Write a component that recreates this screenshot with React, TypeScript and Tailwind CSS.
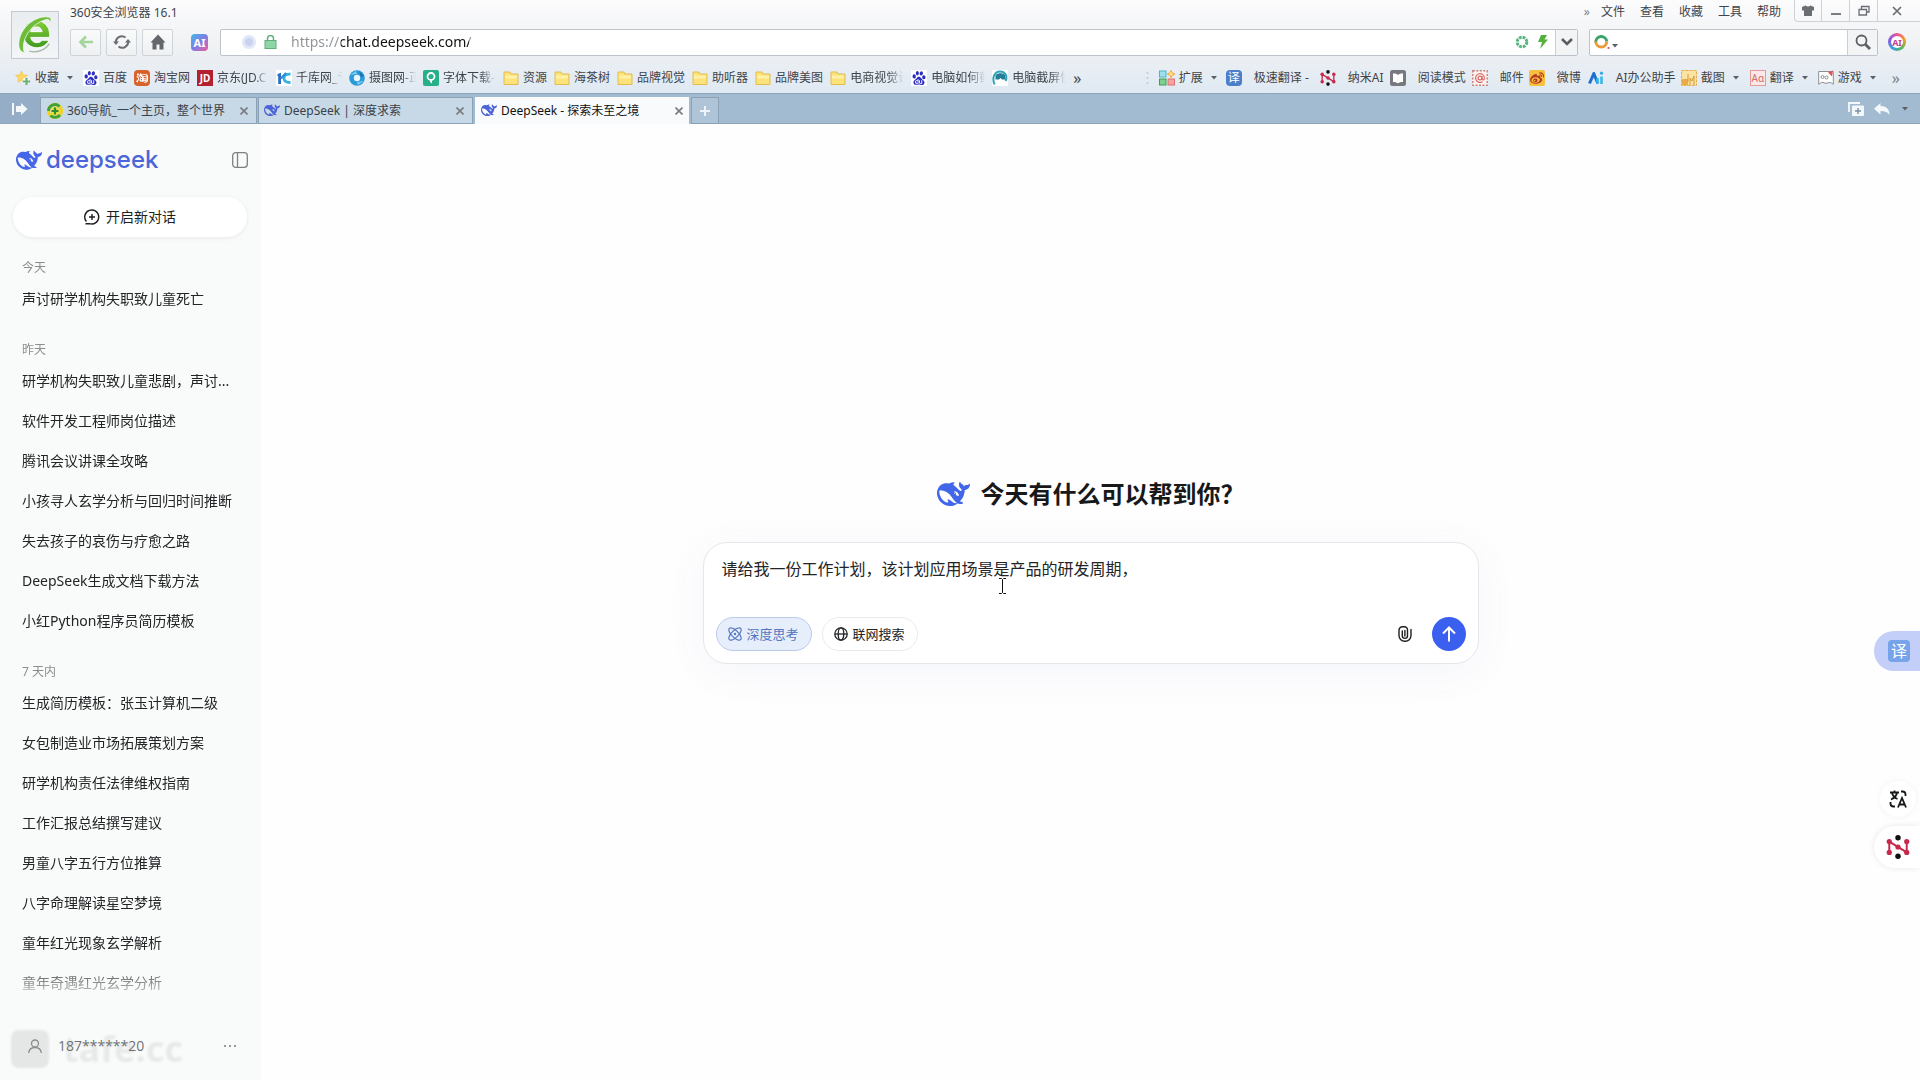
import type { ReactNode } from "react";
import { SiBaidu, SiSinaweibo } from "react-icons/si";
import { RiTaobaoFill } from "react-icons/ri";

const WHALE =
  "M23.748 4.482c-.254-.124-.364.113-.512.234-.051.039-.094.09-.137.136-.372.397-.806.657-1.373.626-.829-.046-1.537.214-2.163.848-.133-.782-.575-1.248-1.247-1.548-.352-.156-.708-.311-.955-.65-.172-.241-.219-.51-.305-.774-.055-.16-.11-.323-.293-.35-.2-.031-.278.136-.356.276-.313.572-.434 1.202-.422 1.84.027 1.436.633 2.58 1.838 3.393.137.093.172.187.129.323-.082.28-.18.552-.266.833-.055.179-.137.217-.329.14a5.526 5.526 0 01-1.736-1.18c-.857-.828-1.631-1.742-2.597-2.458a11.365 11.365 0 00-.689-.471c-.985-.957.13-1.743.388-1.836.27-.098.093-.432-.779-.428-.872.004-1.67.295-2.687.684a3.055 3.055 0 01-.465.137 9.597 9.597 0 00-2.883-.102c-1.885.21-3.39 1.102-4.497 2.623C.082 8.606-.231 10.684.152 12.85c.403 2.284 1.569 4.175 3.36 5.653 1.858 1.533 3.997 2.284 6.438 2.14 1.482-.085 3.133-.284 4.994-1.86.47.234.962.327 1.78.397.63.059 1.236-.03 1.705-.128.735-.156.684-.837.419-.961-2.155-1.004-1.682-.595-2.113-.926 1.096-1.296 2.746-2.642 3.392-7.003.05-.347.007-.565 0-.845-.004-.17.035-.237.23-.256a4.173 4.173 0 001.545-.475c1.396-.763 1.96-2.015 2.093-3.517.02-.23-.004-.467-.247-.588zM11.581 18c-2.089-1.642-3.102-2.183-3.52-2.16-.392.024-.321.471-.235.763.09.288.207.486.371.739.114.167.192.416-.113.603-.673.416-1.842-.14-1.897-.167-1.361-.802-2.5-1.86-3.301-3.307-.774-1.393-1.224-2.887-1.298-4.482-.02-.386.093-.522.477-.592a4.696 4.696 0 011.529-.039c2.132.312 3.946 1.265 5.468 2.774.868.86 1.525 1.887 2.202 2.891.72 1.066 1.494 2.082 2.48 2.914.348.292.625.514.891.677-.802.09-2.14.11-3.054-.614zm1-6.44a.306.306 0 01.415-.287.302.302 0 01.2.288.306.306 0 01-.31.307.303.303 0 01-.304-.308zm3.11 1.596c-.2.081-.399.151-.59.16a1.245 1.245 0 01-.798-.254c-.274-.23-.47-.358-.552-.758a1.73 1.73 0 01.016-.588c.07-.327-.008-.537-.239-.727-.187-.156-.426-.199-.688-.199a.559.559 0 01-.254-.078c-.11-.054-.2-.19-.114-.358.028-.054.16-.186.192-.21.356-.202.767-.136 1.146.016.352.144.618.408 1.001.782.391.451.462.576.685.914.176.265.336.537.445.848.067.195-.019.354-.25.452z";

function Whale({ className }: { className: string }) {
  return (
    <svg viewBox="0 2.5 24 18.5" className={className} fill="currentColor" aria-hidden="true">
      <path fillRule="evenodd" d={WHALE} />
    </svg>
  );
}

function BrowserLogo() {
  return (
    <svg viewBox="0 0 40 42" className="size-10" aria-hidden="true">
      <defs>
        <linearGradient id="leaf" x1="0" y1="0" x2="0" y2="1">
          <stop offset="0" stopColor="#86cf35" />
          <stop offset="1" stopColor="#3f9a22" />
        </linearGradient>
      </defs>
      <path d="M21 5.500a14.500 14.500 0 0 1 14.500 14.500v3.500H15.500c.7 3.500 3 5.500 6.500 5.500 2.500 0 4.500-1 5.500-2.500h7.500a14.500 14.500 0 1 1-14-21zM15.500 17.500h12c-.6-3.300-2.600-5-6-5s-5.400 1.700-6 5z" fill="url(#leaf)" fillRule="evenodd" stroke="#fff" strokeWidth="1" />
      <path d="M36 2.500C22-1 3 13 3 31c0 4.500 2 8 6 8.500C4.500 30 13 9 33 4.500c2 0 3 2 2 5 1.500-2 2.500-5 1-7z" fill="#6ebc3a" stroke="#f4faf0" strokeWidth=".8" />
      <path d="M14 38c8 2 17-1 21-8" stroke="#a5b8a8" strokeWidth="1.400" fill="none" />
    </svg>
  );
}

function Caret({ className = "" }: { className?: string }) {
  return (
    <svg viewBox="0 0 6 4" className={`h-1 w-1.5 shrink-0 text-[#5b6066] ${className}`} fill="currentColor" aria-hidden="true">
      <path d="M0 0h6L3 3.500z" />
    </svg>
  );
}

const Folder = () => (
  <svg viewBox="0 0 16 16" className="size-4" aria-hidden="true">
    <path d="M1 2h6l1 2h7v10.500H1z" fill="#fbe27a" stroke="#e2bd4c" />
    <path d="M2 5.500h12v3H2z" fill="#fff0a6" />
  </svg>
);

const Baidu = () => (
  <span className="flex size-4 items-center justify-center bg-white">
    <SiBaidu className="size-3.5 text-[#2c2fc0]" />
  </span>
);

const StarAdd = () => (
  <svg viewBox="0 0 16 16" className="size-4" aria-hidden="true">
    <path d="M6.500 1l1.800 3.800 4.200.5-3.100 2.900.8 4.100-3.700-2-3.700 2 .8-4.100L.5 5.300l4.200-.5z" fill="#fbd864" stroke="#edc04a" strokeWidth=".6" />
    <path d="M11 8v6M8 11h6" stroke="#fff" strokeWidth="4.500" />
    <path d="M11.500 8v7M8 11.500h7" stroke="#66b37a" strokeWidth="2.200" />
  </svg>
);

const Thousand = () => (
  <svg viewBox="0 0 16 16" className="size-4" aria-hidden="true">
    <path fill="#fff" d="M0 0h16v16H0z" />
    <path d="M1.500 4l3.500-1.200V14H2.200V6.200H1.500z" fill="#2a6fc4" />
    <path d="M14.500 4.200C10 4 8 5.500 8 8.200s2 4.400 6.500 4.300" stroke="#35b2e0" strokeWidth="2.800" fill="none" />
    <path d="M5 8.500L10 3" stroke="#2a8fd4" strokeWidth="2.200" />
  </svg>
);

const Shutter = () => (
  <svg viewBox="0 0 16 16" className="size-4" aria-hidden="true">
    <circle cx="8" cy="8" r="7.800" fill="#2b9ad8" />
    <path d="M1 5l6-4 1 3zM15 11l-6 4-1-3z" fill="#7fcdee" />
    <path d="M10 1l5 5-3 1z" fill="#1670b4" />
    <circle cx="8" cy="8" r="3.200" fill="#e8f6fd" />
  </svg>
);

const FontPin = () => (
  <svg viewBox="0 0 16 16" className="size-4" aria-hidden="true">
    <rect width="16" height="16" rx="2" fill="#25b08a" />
    <circle cx="8" cy="6.500" r="3.500" fill="none" stroke="#fff" strokeWidth="1.800" />
    <path d="M7 10h2v3.500L7 12z" fill="#fff" />
  </svg>
);

const Headset = () => (
  <svg viewBox="0 0 16 16" className="size-4" aria-hidden="true">
    <path fill="#fff" d="M0 0h16v16H0z" />
    <path d="M2.500 14.500C-.5 7 3 1.500 8 1.500S16 6 13.500 11" stroke="#2fa3b8" strokeWidth="2" fill="none" />
    <path d="M3.500 5c3-2.500 7-2.500 9.500 0l.5 4.500H10L8.500 8 7 9.500H3.500z" fill="#237e98" />
  </svg>
);

function Molecule({ className }: { className: string }) {
  return (
    <svg viewBox="0 0 22 22" className={className} aria-hidden="true">
      <path d="M3 16V6l16 10V6" stroke="#c8284a" strokeWidth="1.800" fill="none" strokeLinejoin="round" />
      <g fill="#c8284a">
        <circle cx="3" cy="6" r="2.400" />
        <circle cx="3" cy="16" r="2.400" />
        <circle cx="19" cy="6" r="2.400" />
        <circle cx="19" cy="16" r="2.400" />
        <circle cx="11" cy="11" r="2.400" />
      </g>
      <circle cx="11" cy="2.600" r="2.500" fill="#111" />
      <circle cx="11" cy="19.400" r="2.500" fill="#111" />
    </svg>
  );
}

const ExtensionIcon = () => (
  <svg viewBox="0 0 16 16" className="size-4" aria-hidden="true">
    <rect x=".5" y="1" width="6.500" height="6" fill="#9be2ee" stroke="#4fb4c8" />
    <rect x=".5" y="9" width="6.500" height="6" fill="#7fcf8f" stroke="#3c9f52" />
    <rect x="9" y="9" width="6.500" height="6" fill="#f5a3a3" stroke="#e07070" />
    <path d="M12 .5l1.300 2.200L15.700 4l-2.400 1.300L12 7.700l-1.300-2.400L8.300 4l2.400-1.300z" fill="#fbe08a" stroke="#f0a63a" />
  </svg>
);

const TranslateTile = ({ className }: { className: string }) => (
  <span className={`flex items-center justify-center text-white ${className}`}>译</span>
);

const Reader = () => (
  <svg viewBox="0 0 16 16" className="size-4" aria-hidden="true">
    <rect width="16" height="16" rx="2.500" fill="#77797f" />
    <path d="M3 3.500c2 0 4 .3 5 1.500 1-1.200 3-1.500 5-1.500V12c-2 0-3.500.3-5 1.300C6.500 12.300 5 12 3 12z" fill="#fff" />
  </svg>
);

const Mail = () => (
  <svg viewBox="0 0 16 16" className="size-4" aria-hidden="true">
    <rect x=".8" y=".8" width="14.400" height="14.400" fill="#fdf3f1" stroke="#c98078" strokeWidth="1.400" strokeDasharray="2 1.500" />
    <circle cx="8" cy="8" r="1.900" fill="none" stroke="#dd6a66" strokeWidth="1.200" />
    <path d="M10 6v3c0 1.500 2.400 1.200 2.400-1A4.400 4.400 0 1 0 10.500 11.700" fill="none" stroke="#dd6a66" strokeWidth="1.200" />
  </svg>
);

const Weibo = () => (
  <span className="flex size-4 items-center justify-center rounded-xs bg-[#f7c13d]">
    <SiSinaweibo className="size-3.5 text-[#b23a26]" />
  </span>
);

const Assistant = () => (
  <svg viewBox="0 0 16 16" className="size-4" aria-hidden="true">
    <path d="M1.500 13.500L5.800 3.500l4 10" stroke="#1f6fd0" strokeWidth="3" fill="none" strokeLinejoin="round" />
    <path d="M9.500 13.500V8M13.500 6.500v7.500" stroke="#35b8e8" strokeWidth="2.600" />
    <circle cx="13.500" cy="3.200" r="1.600" fill="#35a8e8" />
  </svg>
);

const Capture = () => (
  <svg viewBox="0 0 16 16" className="size-4" aria-hidden="true">
    <rect x=".5" y=".5" width="15" height="15" fill="#fbe3a4" stroke="#e6ae4c" strokeDasharray="3 1" />
    <path d="M1 15V9h6v6z" fill="#e9ad44" />
    <path d="M7 4v8M9 15V8l2 3 2-5v9" stroke="#d59a3a" fill="none" />
  </svg>
);

const Dictionary = () => (
  <span className="flex size-4 items-center justify-center border border-[#e79a9a] bg-[#fbe9e9] text-[10px] leading-none text-[#d86a6a]">Aα</span>
);

const Game = () => (
  <svg viewBox="0 0 16 16" className="size-4" aria-hidden="true">
    <path d="M.7 1.500h14.600v12.800l-2.800-2-4.500 1-4.500-1-2.800 2z" fill="#fff" stroke="#8c8f95" />
    <circle cx="4.500" cy="7" r="1.500" fill="none" stroke="#8c8f95" />
    <circle cx="8.500" cy="7.500" r="1.500" fill="none" stroke="#8c8f95" />
    <path d="M10 2.500l5-2-1 6z" fill="#d85858" />
  </svg>
);

const bookmarks: { label: string; icon: ReactNode; clip?: string }[] = [
  { label: "百度", icon: <Baidu /> },
  { label: "淘宝网", icon: <span className="flex size-4 items-center justify-center rounded-sm bg-[#d9622b]"><RiTaobaoFill className="size-3.5 text-white" /></span> },
  { label: "京东(JD.C", icon: <span className="flex size-4 items-center justify-center bg-[#b3202e] text-[10px] font-bold leading-none text-white">JD</span>, clip: "w-[52px]" },
  { label: "千库网_专", icon: <Thousand />, clip: "w-[46px]" },
  { label: "摄图网-正", icon: <Shutter />, clip: "w-[47px]" },
  { label: "字体下载-", icon: <FontPin />, clip: "w-[53px]" },
  { label: "资源", icon: <Folder /> },
  { label: "海茶树", icon: <Folder /> },
  { label: "品牌视觉", icon: <Folder /> },
  { label: "助听器", icon: <Folder /> },
  { label: "品牌美图", icon: <Folder /> },
  { label: "电商视觉设", icon: <Folder />, clip: "w-[54px]" },
  { label: "电脑如何截", icon: <Baidu />, clip: "w-[54px]" },
  { label: "电脑截屏快", icon: <Headset />, clip: "w-[54px]" },
];

const plugins: { label: string; icon: ReactNode; box: string; gap: string; caret?: boolean }[] = [
  { label: "扩展", icon: <ExtensionIcon />, box: "w-[67px]", gap: "gap-1", caret: true },
  { label: "极速翻译 -", icon: <TranslateTile className="size-4 rounded-sm bg-[#4a7fc9] text-xs leading-none" />, box: "w-[94px]", gap: "gap-3" },
  { label: "纳米AI", icon: <Molecule className="size-4" />, box: "w-[70px]", gap: "gap-3" },
  { label: "阅读模式", icon: <Reader />, box: "w-[82px]", gap: "gap-3" },
  { label: "邮件", icon: <Mail />, box: "w-[57px]", gap: "gap-3" },
  { label: "微博", icon: <Weibo />, box: "w-[59px]", gap: "gap-3" },
  { label: "AI办公助手", icon: <Assistant />, box: "w-[93px]", gap: "gap-3" },
  { label: "截图", icon: <Capture />, box: "w-[69px]", gap: "gap-1", caret: true },
  { label: "翻译", icon: <Dictionary />, box: "w-[68px]", gap: "gap-1", caret: true },
  { label: "游戏", icon: <Game />, box: "w-[74px]", gap: "gap-1", caret: true },
];

function Header() {
  const tool = "flex h-[27px] w-[31px] items-center justify-center rounded-xs border border-[#cfd4d9] bg-gradient-to-b from-[#fafbfb] to-[#eef0f2]";
  return (
    <header className="bg-gradient-to-b from-[#fcfcfd] via-[#eff1f3] to-[#dfe9f3] text-xs leading-4 text-[#3f444a]">
      <div className="flex h-[62px] gap-[11px] pl-[11px]">
        <button aria-label="360" className="mt-[11px] flex size-12 shrink-0 items-center justify-center border border-[#c3cad1] bg-gradient-to-b from-[#e9edf0] to-[#f3f5f7]">
          <BrowserLogo />
        </button>
        <div className="min-w-0 flex-1">
          <div className="flex h-6 items-start justify-between">
            <span className="mt-[5px]">360安全浏览器 16.1</span>
            <div className="flex items-start">
              <nav className="mt-1 mr-[13px] flex gap-[15px]">
                <span className="-mr-1 text-[#7c8188]">»</span>
                {["文件", "查看", "收藏", "工具", "帮助"].map((m) => (
                  <button key={m}>{m}</button>
                ))}
              </nav>
              <div className="flex h-[22px] rounded-bl-sm border-b border-l border-[#cdd2d7] text-[#6a6e73]">
                <button aria-label="皮肤" className="flex w-[27px] items-center justify-center border-r border-[#cdd2d7]">
                  <svg viewBox="0 0 12 12" className="size-3" fill="currentColor" aria-hidden="true"><path d="M0 2l3.500-1.500Q6 2.500 8.500.5L12 2v3.500H10V11H2V5.500H0z" /></svg>
                </button>
                <button aria-label="最小化" className="flex w-7 items-center justify-center border-r border-[#cdd2d7]"><span className="mt-1.5 h-0.5 w-2.5 bg-[#7a7e83]" /></button>
                <button aria-label="还原" className="flex w-7 items-center justify-center border-r border-[#cdd2d7]">
                  <svg viewBox="0 0 12 12" className="size-3" fill="none" stroke="currentColor" strokeWidth="1.300" aria-hidden="true"><path d="M3.500 4V1.500h7.500v5.500H8.500M1 4.500h7.500V10H1z" /></svg>
                </button>
                <button aria-label="关闭" className="flex w-[42px] items-center justify-center pr-1">
                  <svg viewBox="0 0 10 10" className="size-2.5" stroke="currentColor" strokeWidth="1.700" aria-hidden="true"><path d="M1 1l8 8M9 1L1 9" /></svg>
                </button>
              </div>
            </div>
          </div>
          <div className="flex h-9 items-center pr-3.5">
            <div className="flex gap-[5px]">
              <button aria-label="后退" className={tool}>
                <svg viewBox="0 0 16 14" className="h-3.5 w-4" fill="none" stroke="#a4d59b" strokeWidth="2.600" aria-hidden="true"><path d="M15 7H2.500M8 1.500L2.500 7 8 12.500" /></svg>
              </button>
              <button aria-label="刷新" className={tool}>
                <svg viewBox="0 0 18 16" className="h-4 w-[18px]" aria-hidden="true">
                  <path d="M3 9.500a6 6 0 0 1 9.500-6M15 6.500a6 6 0 0 1-9.500 6" fill="none" stroke="#6a6e73" strokeWidth="2" />
                  <path d="M0 7.500h6L3 11zM18 8.500h-6L15 5z" fill="#6a6e73" />
                </svg>
              </button>
              <button aria-label="主页" className={tool}>
                <svg viewBox="0 0 16 16" className="size-4" fill="#63676c" aria-hidden="true"><path d="M8 .5l7.500 8H13.500V15.500H9.500V10.500h-3v5H2.500v-7H.5z" /></svg>
              </button>
            </div>
            <button aria-label="AI" className="ml-[18px] flex size-[17px] items-center justify-center rounded-sm bg-gradient-to-br from-[#2fb8ea] via-[#7b7be6] to-[#ee4f9c] text-[11px] font-bold leading-none text-white">AI</button>
            <div className="ml-3 flex h-[27px] flex-1 items-center rounded-xs border border-[#bcc3ca] bg-white">
              <span className="ml-[21px] flex size-3.5 items-center justify-center rounded-full bg-[#e1e7f6]"><span className="size-2 rounded-full bg-[#c9d4f0]" /></span>
              <svg viewBox="0 0 13 14" className="ml-2 h-3.5 w-[13px]" aria-hidden="true">
                <path d="M3.500 6V3.500a3 3 0 0 1 6 0V6" fill="none" stroke="#5fae7c" strokeWidth="1.500" />
                <rect x="1" y="5.500" width="11" height="8" fill="#8fd6a6" stroke="#5fae7c" />
              </svg>
              <label className="sr-only" htmlFor="address">地址栏</label>
              <input
                id="address"
                defaultValue="https://chat.deepseek.com/"
                className="ml-3.5 min-w-0 flex-1 bg-[linear-gradient(to_right,#8f9296_50px,#111_50px,#111_178px,#8f9296_178px)] bg-clip-text text-sm leading-5 text-transparent outline-none"
              />
              <svg viewBox="0 0 14 14" className="mr-[9px] size-3.5" aria-hidden="true">
                <circle cx="7" cy="7" r="4.800" fill="none" stroke="#55b57e" strokeWidth="3" strokeDasharray="2.800 .97" />
              </svg>
              <svg viewBox="0 0 10 14" className="mr-[7px] h-3.5 w-2.5" fill="#54b13e" aria-hidden="true"><path d="M3 0h6L6.500 4.500H10L2 14l2-7H0z" /></svg>
              <button aria-label="展开地址" className="flex h-full w-[22px] items-center justify-center border-l border-[#c9ced4] bg-[#f2f4f5]">
                <svg viewBox="0 0 12 8" className="h-2 w-3" fill="none" stroke="#5a5e63" strokeWidth="2.600" aria-hidden="true"><path d="M1 1l5 5 5-5" /></svg>
              </button>
            </div>
            <div className="ml-[11px] flex h-[27px] w-[289px] items-center rounded-xs border border-[#bcc3ca] bg-white">
              <svg viewBox="0 0 16 16" className="ml-1 size-4" fill="none" strokeWidth="2.800" aria-hidden="true">
                <path d="M1.800 8.500a5.500 5.500 0 0 1 11-1" stroke="#3aa56a" />
                <path d="M1.800 7.500a5.500 5.500 0 0 0 11 0" stroke="#ee9a3a" />
                <path d="M14.500 13v2" stroke="#e0685a" strokeWidth="2" />
              </svg>
              <Caret className="mt-2 ml-0.5" />
              <label className="sr-only" htmlFor="search">搜索</label>
              <input id="search" className="min-w-0 flex-1 bg-transparent outline-none" />
              <button aria-label="搜索" className="flex h-full w-[30px] items-center justify-center border-l border-[#c9ced4] bg-[#f2f4f5]">
                <svg viewBox="0 0 16 16" className="size-4" fill="none" stroke="#5d6166" aria-hidden="true"><circle cx="6.500" cy="6.500" r="5" strokeWidth="1.800" /><path d="M10 10l5 5" strokeWidth="2.800" /></svg>
              </button>
            </div>
            <button aria-label="AI助手" className="ml-2.5 flex size-[18px] items-center justify-center rounded-full bg-[conic-gradient(#ee4f9c,#f0a020,#55b560,#35a0e8,#8a5ae0,#ee4f9c)]">
              <span className="flex size-3 items-center justify-center rounded-full bg-white text-[9px] font-bold leading-none text-[#c04090]">AI</span>
            </button>
          </div>
        </div>
      </div>
      <div className="flex h-8 items-center justify-between border-b border-[#8ea6bc]">
        <nav className="flex items-center pl-[15px]">
          <a href="#" className="mr-2.5 flex items-center gap-1"><StarAdd />收藏<Caret className="ml-1" /></a>
          {bookmarks.map((b) => (
            <a key={b.label} href="#" className="mr-[7px] flex items-center gap-1">
              {b.icon}
              {b.clip ? (
                <span className={`overflow-hidden whitespace-nowrap [mask-image:linear-gradient(to_right,#000_70%,transparent)] ${b.clip}`}>{b.label}</span>
              ) : (
                <span className="whitespace-nowrap">{b.label}</span>
              )}
            </a>
          ))}
          <span className="text-base leading-4">»</span>
        </nav>
        <nav className="flex items-center pr-5">
          <svg viewBox="0 0 4 14" className="mr-[9px] h-3.5 w-1" fill="#c3c8cd" aria-hidden="true"><circle cx="1.500" cy="2" r="1" /><circle cx="1.500" cy="7" r="1" /><circle cx="1.500" cy="12" r="1" /></svg>
          {plugins.map((p) => (
            <a key={p.label} href="#" className={`flex items-center whitespace-nowrap ${p.gap} ${p.box}`}>
              <span className="shrink-0">{p.icon}</span>
              {p.label}
              {p.caret && <Caret className="ml-1" />}
            </a>
          ))}
          <span className="text-base leading-4 text-[#7c8188]">»</span>
        </nav>
      </div>
    </header>
  );
}

function TabClose() {
  return (
    <button aria-label="关闭标签页" className="ml-auto text-[#777c82]">
      <svg viewBox="0 0 8 8" className="size-2" stroke="currentColor" strokeWidth="1.600" aria-hidden="true"><path d="M.5.5l7 7M7.500.5l-7 7" /></svg>
    </button>
  );
}

function TabStrip() {
  return (
    <div className="flex h-[30px] items-end bg-[#a3bbd1] text-xs leading-4 text-[#3a4148]">
      <button aria-label="标签列表" className="flex h-full w-10 items-center justify-center border-b border-[#8ea3b7] bg-[#95adc6]">
        <svg viewBox="0 0 16 12" className="h-3 w-4" fill="#f4f8fb" aria-hidden="true"><path d="M0 0h2v12H0zM4 3h5V0l6.500 6L9 12V9H4z" /></svg>
      </button>
      <div className="flex h-[27px] w-[217px] items-center gap-1 border border-[#8ba1b6] bg-[#c7d8e6] pr-2 pl-1.5">
        <svg viewBox="0 0 16 16" className="size-4" aria-hidden="true">
          <circle cx="8" cy="8" r="6.500" fill="none" stroke="#f2d21f" strokeWidth="3" />
          <path d="M1.500 8a6.500 6.500 0 0 1 11-4.500M13 12a6.500 6.500 0 0 1-9.500.5" fill="none" stroke="#3fa33a" strokeWidth="3" />
          <circle cx="8" cy="8" r="4.500" fill="#ecdf3c" />
          <path d="M8 4.500v7M4.500 8h7" stroke="#2f8c34" strokeWidth="2.200" />
        </svg>
        <span className="whitespace-nowrap">360导航_一个主页，整个世界</span>
        <TabClose />
      </div>
      <div className="ml-px flex h-[27px] w-[215px] items-center gap-1 border border-[#8ba1b6] bg-[#c7d8e6] pr-2 pl-[5px]">
        <Whale className="w-4 text-[#4d63d8]" />
        <span>DeepSeek | 深度求索</span>
        <TabClose />
      </div>
      <div className="ml-0.5 flex h-[27px] w-[214px] items-center gap-1 bg-[#f8fafc] pr-1.5 pl-1.5 text-[#111]">
        <Whale className="w-4 text-[#4d63d8]" />
        <span>DeepSeek - 探索未至之境</span>
        <TabClose />
      </div>
      <button aria-label="新建标签页" className="ml-0.5 flex h-[27px] w-7 items-center justify-center border border-[#8ba1b6] bg-[#afc4d7]">
        <svg viewBox="0 0 12 12" className="size-3" stroke="#edf3f8" strokeWidth="2" aria-hidden="true"><path d="M6 1v10M1 6h10" /></svg>
      </button>
      <div className="flex h-full flex-1 items-center justify-end gap-2.5 border-b border-[#8ea3b7] pr-3">
        <button aria-label="复制标签页">
          <svg viewBox="0 0 16 14" className="h-3.5 w-4" aria-hidden="true"><path d="M1 10V1h11" fill="none" stroke="#f4f8fb" strokeWidth="1.800" /><rect x="4" y="3.500" width="12" height="10.500" rx="1" fill="#f4f8fb" /><path d="M10 6v6M7 9h6" stroke="#7890a8" strokeWidth="1.400" /></svg>
        </button>
        <button aria-label="恢复标签页">
          <svg viewBox="0 0 16 12" className="h-3 w-4" fill="#f4f8fb" aria-hidden="true"><path d="M6.500 0v3C12 3 15.500 6 15.500 12 13.500 9 11 8 6.500 8v3.500L0 5.700z" /></svg>
        </button>
        <Caret className="ml-0.5" />
      </div>
    </div>
  );
}

const history = [
  { label: "今天", items: ["声讨研学机构失职致儿童死亡"] },
  {
    label: "昨天",
    items: ["研学机构失职致儿童悲剧，声讨...", "软件开发工程师岗位描述", "腾讯会议讲课全攻略", "小孩寻人玄学分析与回归时间推断", "失去孩子的哀伤与疗愈之路", "DeepSeek生成文档下载方法", "小红Python程序员简历模板"],
  },
  {
    label: "7 天内",
    items: ["生成简历模板：张玉计算机二级", "女包制造业市场拓展策划方案", "研学机构责任法律维权指南", "工作汇报总结撰写建议", "男童八字五行方位推算", "八字命理解读星空梦境", "童年红光现象玄学解析", "童年奇遇红光玄学分析"],
  },
];

function Sidebar() {
  return (
    <aside className="flex w-[261px] shrink-0 flex-col bg-[#f9fbfa]">
      <div className="flex items-center justify-between px-4 pt-5 pr-[13px]">
        <div className="flex items-center gap-1 text-[#4a66d9]">
          <Whale className="w-[26px] text-[#4566e8]" />
          <span className="font-[Inter] text-2xl leading-8 font-medium">deepseek</span>
        </div>
        <button aria-label="收起边栏" className="text-[#7d8083]">
          <svg viewBox="0 0 16 16" className="size-4" fill="none" stroke="currentColor" strokeWidth="1.300" aria-hidden="true"><rect x=".7" y=".7" width="14.600" height="14.600" rx="3" /><path d="M5.500 1v14" /></svg>
        </button>
      </div>
      <button className="mt-[21px] mr-3.5 ml-[13px] flex h-10 shrink-0 items-center justify-center gap-1.5 rounded-full bg-white text-sm text-[#1d1f21] shadow-[0_1px_4px_rgba(0,0,0,0.08)]">
        <svg viewBox="0 0 16 16" className="size-4" fill="none" stroke="currentColor" strokeWidth="1.400" aria-hidden="true"><path d="M2.400 12.500A7 7 0 1 1 5.500 14.600M1.500 14.800h4.500M8 5v6M5 8h6" /></svg>
        开启新对话
      </button>
      <nav className="min-h-0 flex-1 overflow-hidden pt-4 [mask-image:linear-gradient(to_bottom,#000_calc(100%-44px),transparent)]">
        {history.map((g) => (
          <section key={g.label} className="mb-4">
            <h2 className="px-[22px] pt-[7px] pb-[3px] text-xs leading-4 text-[#8b8d90]">{g.label}</h2>
            {g.items.map((t) => (
              <a key={t} href="#" className="flex h-10 items-center px-[22px] text-sm whitespace-nowrap text-[#222426]">{t}</a>
            ))}
          </section>
        ))}
      </nav>
      <div className="relative flex h-[75px] shrink-0 items-center pt-1.5 pr-[25px] pl-7 text-sm text-[#6f7275]">
        <div aria-hidden="true" className="absolute top-[25px] left-[11px] flex items-center gap-3.5 opacity-70 blur-[1px]">
          <span className="size-[38px] rounded-lg bg-[#dddfde]" />
          <span className="text-4xl leading-9 font-bold text-[#e0e2e1]">tafe.cc</span>
        </div>
        <svg viewBox="0 0 14 14" className="relative size-3.5" fill="none" stroke="#8a8c8f" strokeWidth="1.300" aria-hidden="true"><circle cx="7" cy="4.500" r="3.500" /><path d="M.7 14c.3-4 2.500-5.500 6.300-5.500s6 1.500 6.300 5.500" /></svg>
        <span className="relative ml-4 font-['Open_Sans','Noto_Sans',sans-serif]">187******20</span>
        <button aria-label="更多" className="relative ml-auto flex gap-[3px]">
          <span className="size-0.5 rounded-full bg-[#77797c]" />
          <span className="size-0.5 rounded-full bg-[#77797c]" />
          <span className="size-0.5 rounded-full bg-[#77797c]" />
        </button>
      </div>
    </aside>
  );
}

function Composer() {
  return (
    <form className="relative w-full max-w-[776px] rounded-[24px] border border-[#e6e7ea] bg-white px-3 pb-3 shadow-[0_8px_40px_rgba(80,100,180,0.06)]" onSubmit={(e) => e.preventDefault()}>
      <label className="sr-only" htmlFor="prompt">给 DeepSeek 发送消息</label>
      <textarea id="prompt" rows={2} defaultValue="请给我一份工作计划，该计划应用场景是产品的研发周期，" className="mt-3.5 block h-14 w-full resize-none bg-transparent px-1.5 text-base leading-6 text-[#222426] outline-none" />
      <div className="mt-1 flex items-center gap-2.5 text-[13px] leading-5">
        <button type="button" className="flex h-[34px] w-24 items-center justify-center gap-1 rounded-full border border-[#bccaec] bg-[#e6eefb] text-[#5577c0]">
          <svg viewBox="0 0 14 14" className="size-3.5" fill="none" stroke="currentColor" strokeWidth="1.200" aria-hidden="true">
            <ellipse cx="7" cy="7" rx="8" ry="3.400" transform="rotate(45 7 7)" />
            <ellipse cx="7" cy="7" rx="8" ry="3.400" transform="rotate(-45 7 7)" />
            <circle cx="7" cy="7" r="1.200" fill="currentColor" stroke="none" />
          </svg>
          深度思考
        </button>
        <button type="button" className="flex h-[34px] w-24 items-center justify-center gap-1 rounded-full border border-[#eaebed] bg-white text-[#222426]">
          <svg viewBox="0 0 14 14" className="size-3.5" fill="none" stroke="currentColor" strokeWidth="1.300" aria-hidden="true"><circle cx="7" cy="7" r="6.200" /><ellipse cx="7" cy="7" rx="2.800" ry="6.200" /><path d="M.8 7h12.400" /></svg>
          联网搜索
        </button>
        <button type="button" aria-label="上传附件" className="ml-auto text-[#1d1f21]">
          <svg viewBox="0 0 14 16" className="h-4 w-3.5" fill="none" stroke="currentColor" strokeWidth="1.400" strokeLinecap="round" aria-hidden="true"><path d="M4.300 5v4.800a2.600 2.600 0 0 0 5.200 0V4a3 3 0 0 0-3-3.200H4.500A3.500 3.500 0 0 0 1 4.300V9.500a5.700 5.700 0 0 0 6 5.700 5.700 5.700 0 0 0 6-5.700V3.500M6.900 4.500V10" /></svg>
        </button>
        <button type="submit" aria-label="发送" className="ml-2.5 flex size-[34px] items-center justify-center rounded-full bg-[#3b5fee]">
          <svg viewBox="0 0 14 16" className="h-4 w-3.5" fill="none" stroke="#fff" strokeWidth="2" aria-hidden="true"><path d="M7 15.500V1.500M1 7.500l6-6 6 6" /></svg>
        </button>
      </div>
      <svg viewBox="0 0 7 16" className="absolute top-[35px] left-[295px] h-4 w-[7px]" fill="none" stroke="#111" aria-hidden="true"><path d="M0 .5h2.500l1 1 1-1H7M0 15.500h2.500l1-1 1 1H7M3.500 1.500v13" /></svg>
    </form>
  );
}

export default function App() {
  return (
    <div className="flex h-screen flex-col overflow-hidden bg-[#fefefe] font-['Noto_Sans','Noto_Sans_CJK_SC',sans-serif]">
      <Header />
      <TabStrip />
      <div className="relative flex min-h-0 flex-1">
        <Sidebar />
        <main className="flex min-w-0 flex-1 flex-col items-center justify-center px-6">
          <h1 className="flex items-center gap-[11px] text-2xl leading-9 font-bold text-[#16181a]">
            <Whale className="w-[33px] text-[#4166ea]" />
            今天有什么可以帮到你？
          </h1>
          <div className="mt-[30px] mb-16 flex w-full justify-center"><Composer /></div>
        </main>
        <div className="absolute top-[507px] right-0 flex flex-col items-end">
          <button aria-label="翻译页面" className="flex h-10 w-[46px] items-center rounded-l-full bg-[#c3cff9] pl-3.5">
            <TranslateTile className="size-[22px] rounded-sm bg-[#76a3ea] text-base leading-none" />
          </button>
          <button aria-label="划词翻译" className="mt-[110px] mr-1 flex size-9 items-center justify-center rounded-full bg-white shadow-[0_0_6px_rgba(0,0,0,0.05)]">
            <svg viewBox="0 0 18 18" className="size-[18px]" fill="none" stroke="#16181a" strokeWidth="1.800" aria-hidden="true"><path d="M1 2.500h9M5.500.5v2M2 9.500c3.500-1.500 5.500-3.500 6-7M3 3c.8 3 2.800 5 5.500 6M12 1.500h1.500a3 3 0 0 1 3 3V6M1.500 12v1.500a3 3 0 0 0 3 3H6M9 17.500L13 8l4 9.500M10.300 14.500h5.400" /></svg>
          </button>
          <button aria-label="纳米AI" className="mt-[9px] flex h-[42px] w-[46px] items-center rounded-l-full bg-white pl-3 shadow-[0_0_6px_rgba(0,0,0,0.09)]">
            <Molecule className="size-6" />
          </button>
        </div>
      </div>
    </div>
  );
}
